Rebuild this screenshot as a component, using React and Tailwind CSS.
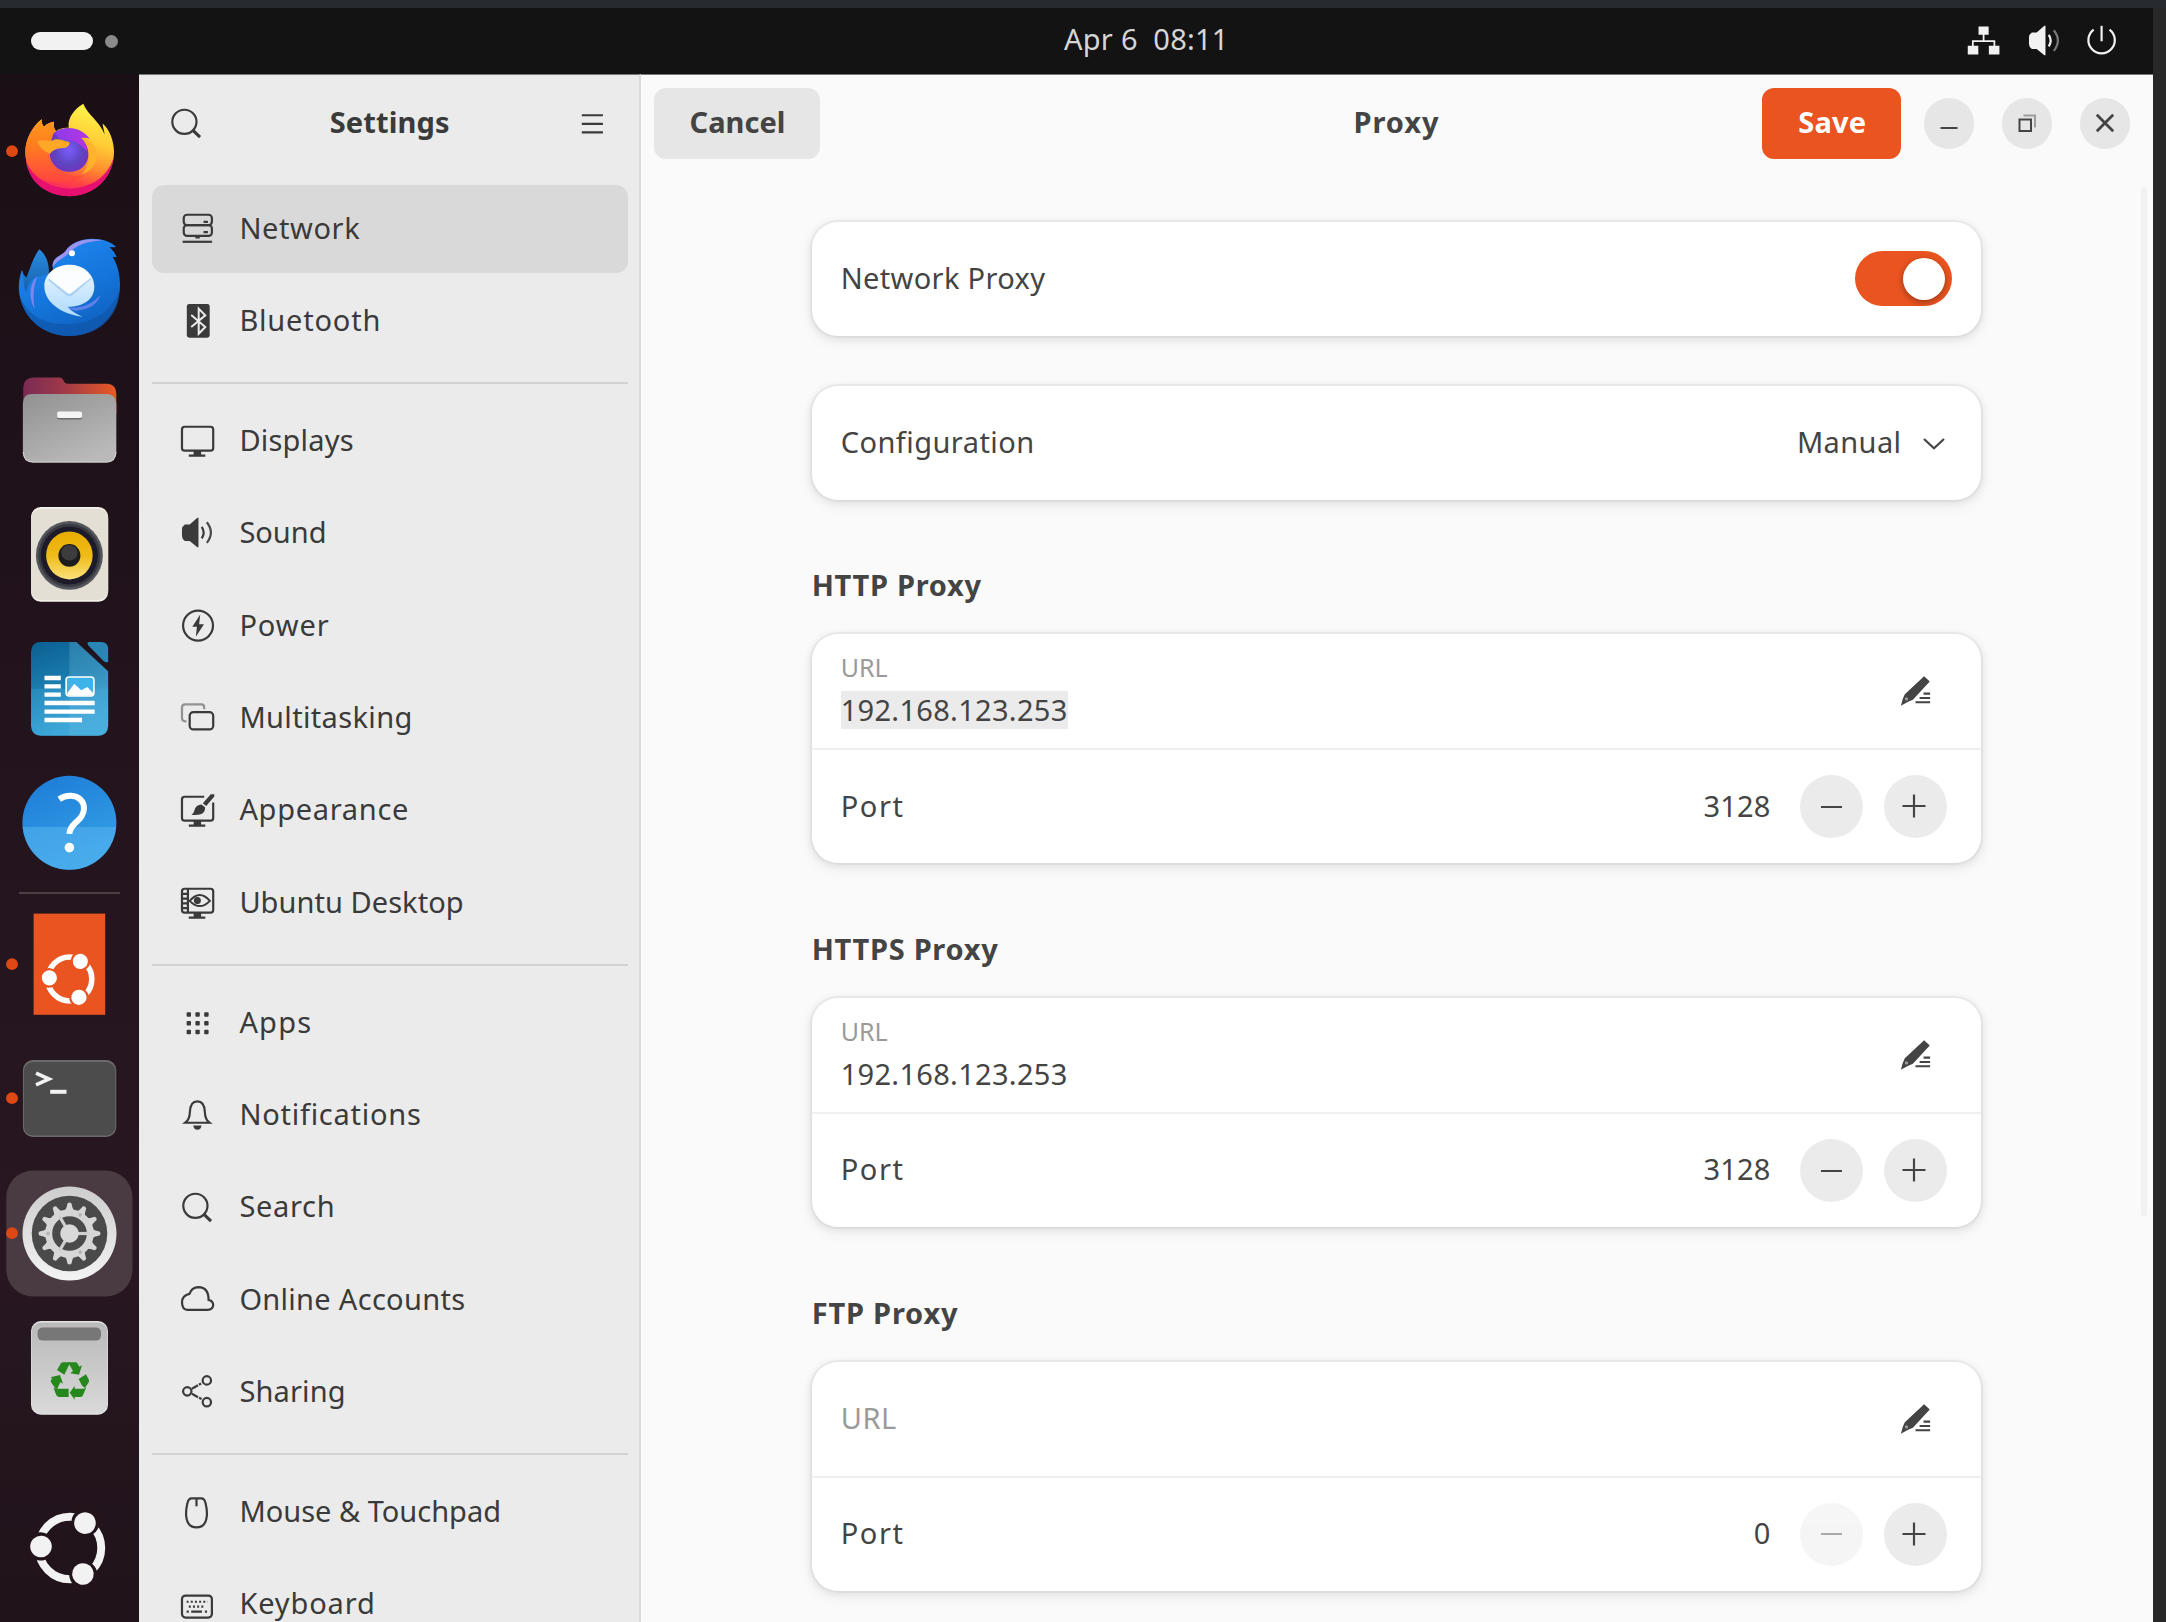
import React from "react";

/* ---------- symbolic 16-unit icons ---------- */

function Sym({ children, className = "size-[35.2px]" }) {
  return (
    <svg
      viewBox="0 0 16 16"
      fill="none"
      stroke="currentColor"
      strokeWidth="1"
      className={"shrink-0 " + className}
    >
      {children}
    </svg>
  );
}

const fillOnly = { fill: "currentColor", stroke: "none" };

const MonitorStand = () => (
  <path d="M6.200 12.600h3.400v1.700h1.900v1.100H4v-1.100h2.200z" {...fillOnly} />
);

const NetworkIcon = () => (
  <Sym>
    <rect x="1.700" y="1.700" width="12.800" height="4.700" rx="1.500" />
    <rect x="1.700" y="6.400" width="12.800" height="4.900" rx="1.500" />
    <path d="M10.700 4.400h2v1h-2zM10.700 9.100h2v1h-2zM7 11.300h2v1.200H7z" {...fillOnly} />
    <path d="M1.200 14h13.400" />
  </Sym>
);

const BluetoothIcon = () => (
  <Sym>
    <rect x="3.100" y="0.500" width="10.400" height="15.300" rx="1.100" {...fillOnly} />
    <path d="M5.100 5.400 11.500 10.900 8.500 14V2.600l3 3-6.400 5.300" stroke="#ebebeb" strokeWidth="0.900" />
  </Sym>
);

const DisplaysIcon = () => (
  <Sym>
    <rect x="0.900" y="1.700" width="14.200" height="10.900" rx="1.200" />
    <MonitorStand />
  </Sym>
);

const SoundIcon = ({ dimWave }) => (
  <Sym>
    <path d="M2.200 4.300h2.200L7.900 1.300h.5v13.400H7.900L4.400 11.800H2.200Q.9 10.800.9 9.500V6.500Q.9 5.200 2.200 4.300z" {...fillOnly} />
    <path d="M9.900 5.400q1.700 2.600 0 5.200" />
    <path d="M12.200 3.300q3.700 4.700 0 9.400" strokeOpacity={dimWave ? 0.45 : 0.9} />
  </Sym>
);

const PowerIcon = () => (
  <Sym>
    <circle cx="8.200" cy="8" r="6.800" />
    <path d="M9.200 2.900 5.600 8.500H7.700L7.200 13.100 10.900 7.400H8.700z" {...fillOnly} />
  </Sym>
);

const MultitaskingIcon = () => (
  <Sym>
    <path d="M2.900 9.700H2.400Q.9 9.700.9 8.200V3.500Q.9 2 2.400 2H9.800Q11 2 11 3.400V4.200" strokeOpacity="0.500" />
    <rect x="4.400" y="5.500" width="10.700" height="7.900" rx="1.700" />
  </Sym>
);

const AppearanceIcon = () => (
  <Sym>
    <path d="M11 1.700H2.100Q.9 1.700.9 2.900V11.400Q.9 12.600 2.100 12.600H13.900Q15.100 12.600 15.100 11.400V4.300" />
    <MonitorStand />
    <path d="M14 .6h1.600v1L11.900 5.900 10.400 4.700zM9.800 5.200 11.400 6.500Q11.500 8.900 9.400 9.700 7.300 10.300 5.200 9.900 6.400 9 6.600 7.700 7.200 5.300 9.800 5.200z" {...fillOnly} />
  </Sym>
);

const UbuntuDesktopIcon = () => (
  <Sym>
    <rect x="0.900" y="1.700" width="14.200" height="10.900" rx="1.200" />
    <MonitorStand />
    <path d="M3.600 1.700v10.900M.9 4h2.700M.9 6.200h2.700M.9 8.400h2.700M.9 10.500h2.700" />
    <path d="M4.400 7.200Q9 1.800 13.600 7.200 9 12 4.400 7.200z" strokeWidth="0.900" />
    <circle cx="7.900" cy="7.100" r="1.600" {...fillOnly} />
  </Sym>
);

const AppsIcon = () => (
  <Sym>
    {[3, 7, 11].map((y) =>
      [3, 7, 11].map((x) => (
        <rect key={x + "-" + y} x={x} y={y + 0.3} width="2" height="2" rx="0.400" {...fillOnly} />
      ))
    )}
  </Sym>
);

const BellIcon = () => (
  <Sym>
    <path d="M2.400 11.700Q4.400 10.200 4.500 6.800 4.700 2 7.900 2 11.100 2 11.300 6.800 11.400 10.200 13.400 11.700z" />
    <path d="M6 13h3.800Q9.500 14.900 7.900 14.900 6.300 14.900 6 13z" {...fillOnly} />
  </Sym>
);

const SearchIcon = () => (
  <Sym>
    <circle cx="7" cy="7.200" r="5.500" />
    <path d="M10.800 11 14.100 14.200" strokeWidth="1.400" />
  </Sym>
);

const CloudIcon = () => (
  <Sym>
    <path d="M3.400 12.700H12.800Q15.100 12.500 15.100 10.400 15 8.600 13 8.100 13 2.400 8.400 2.300 5.300 2.400 4.300 5.400 1 6 .9 9.300 1 12.500 3.400 12.700z" />
  </Sym>
);

const ShareIcon = () => (
  <Sym>
    <circle cx="3.300" cy="7.900" r="1.900" />
    <circle cx="12.200" cy="2.900" r="1.900" />
    <circle cx="12.200" cy="12.800" r="1.900" />
    <path d="M5.400 6.700 9.600 4.300M5.400 9 9.800 11.400" strokeDasharray="3.200 0.500" />
  </Sym>
);

const MouseIcon = () => (
  <Sym>
    <path d="M5.100 2H9.900Q11.300 2.200 11.700 4.600 12.400 7.500 12.200 10 11.700 15.200 7.500 15.200 3.300 15.200 2.800 10 2.600 7.500 3.300 4.600 3.700 2.200 5.100 2z" />
    <path d="M7.500 2v3.600" />
  </Sym>
);

const KeyboardIcon = () => (
  <Sym>
    <rect x="0.900" y="3.900" width="13.600" height="10" rx="1.600" />
    <path d="M3 6.700h9.600M4 8.900h7.600" strokeDasharray="0.900 1" />
    <path d="M3 11.200h1M5.100 11.200h4.900M11.300 11.200h1" />
  </Sym>
);

const MenuIcon = () => (
  <Sym>
    <path d="M3.100 4.200h9.600M3.100 8.100h9.600M3.100 12h9.600" />
  </Sym>
);

/* ---------- top bar icons ---------- */

const WiredIcon = () => (
  <Sym>
    <path d="M5.700 1.600h4.600v3.700H5.700zM.8 10.300h4.800v4H.8zM10.400 10.300h4.800v4h-4.800z" {...fillOnly} />
    <path d="M8 5v3.200M3.100 10.500V8.200h9.800v2.300" strokeWidth="0.800" />
  </Sym>
);

const ShutdownIcon = () => (
  <Sym>
    <path d="M4.400 3A6 6 0 1 0 11.600 3" />
    <path d="M8 1.300v7" />
  </Sym>
);

/* ---------- dock artwork ---------- */

function Slot({ children, dot }) {
  return (
    <svg viewBox="0 0 139 134.4" className="block h-[134.4px] w-[139px] shrink-0">
      {children}
      {dot && <circle cx="12" cy="67.200" r="5.900" fill="#dd4814" />}
    </svg>
  );
}

const Firefox = () => (
  <Slot dot>
    <defs>
      <linearGradient id="ffBody" gradientUnits="userSpaceOnUse" x1="265" y1="60" x2="190" y2="316">
        <stop offset="0" stopColor="#ffef48" />
        <stop offset="0.350" stopColor="#ffc934" />
        <stop offset="0.620" stopColor="#ff8a2e" />
        <stop offset="0.820" stopColor="#ff4245" />
        <stop offset="1" stopColor="#f5206c" />
      </linearGradient>
      <radialGradient id="ffGlobe" cx="0.480" cy="0.500" r="0.620">
        <stop offset="0" stopColor="#7a5cff" />
        <stop offset="0.550" stopColor="#5f44bf" />
        <stop offset="1" stopColor="#7c2bc0" />
      </radialGradient>
      <linearGradient id="ffLeft" x1="0" y1="0" x2="0" y2="1">
        <stop offset="0" stopColor="#ff9a1a" />
        <stop offset="0.450" stopColor="#ff7a22" />
        <stop offset="1" stopColor="#ff4341" />
      </linearGradient>
      <linearGradient id="ffHair" x1="0" y1="0" x2="1" y2="0">
        <stop offset="0" stopColor="#8b3de8" />
        <stop offset="1" stopColor="#b833e6" />
      </linearGradient>
    </defs>
    <g transform="translate(0 6.500) scale(0.33333)">
      <path
        d="M250 40C262 72 298 92 314 132C312 118 308 108 308 99C328 116 342 150 342 184C342 260 282 317 208 317C134 317 76 260 76 184C76 148 96 108 125 86C124 96 127 103 132 109C142 99 152 95 162 94C160 105 162 115 168 122C180 113 196 112 206 112C202 80 225 55 250 40Z"
        fill="url(#ffBody)"
      />
      <path
        d="M76 184C76 148 96 108 125 86C124 96 127 103 132 109C142 99 152 95 162 94C160 105 162 115 168 122L150 190C152 235 200 262 250 256C200 290 120 280 86 236Q76 206 76 184Z"
        fill="url(#ffLeft)"
      />
      <path d="M78 214C106 272 160 294 208 294C270 294 320 262 340 205C332 270 278 317 208 317C142 317 88 278 78 214Z" fill="#e5106f" />
      <path d="M160 130C182 106 240 105 268 144C258 141 250 140 243 142C270 165 272 204 254 224C242 238 226 244 207 244C175 244 149 218 149 188C149 176 150 160 160 130Z" fill="url(#ffGlobe)" />
      <path d="M164 126C185 108 240 105 268 144C256 140 248 140 242 143C254 154 261 166 263 184Q225 140 180 148Z" fill="url(#ffHair)" />
      <path d="M243 142C266 144 294 164 290 200C287 226 268 244 244 252C262 236 269 212 266 188C263 166 254 152 243 142Z" fill="#ffb22c" fillOpacity="0.900" />
      <path d="M112 152C124 146 140 153 158 150C170 142 184 149 206 154C212 160 206 168 196 172C176 174 162 174 150 190C132 182 116 168 112 152Z" fill="#ffa726" />
    </g>
  </Slot>
);

const Thunderbird = () => (
  <Slot>
    <defs>
      <linearGradient id="tbBody" x1="0.200" y1="0" x2="0.700" y2="1">
        <stop offset="0" stopColor="#2089f2" />
        <stop offset="0.550" stopColor="#1475db" />
        <stop offset="1" stopColor="#0f5fbd" />
      </linearGradient>
      <linearGradient id="tbMail" x1="0" y1="0" x2="0" y2="1">
        <stop offset="0" stopColor="#eef7ff" />
        <stop offset="1" stopColor="#aedafd" />
      </linearGradient>
      <linearGradient id="tbWing" x1="0" y1="0" x2="0" y2="1">
        <stop offset="0" stopColor="#2a8be0" />
        <stop offset="1" stopColor="#0b4f93" />
      </linearGradient>
    </defs>
    <g transform="translate(0 -128) scale(0.33333)">
      <path d="M118 478C140 495 150 525 146 560L80 660C50 620 52 575 66 540C68 550 72 558 80 562C92 530 100 500 118 478Z" fill="url(#tbWing)" />
      <path
        d="M158 532C156 500 186 498 196 484C216 452 262 442 296 448C316 450 334 458 348 470C340 472 334 472 328 472C338 480 346 490 350 502C346 502 342 500 338 500C354 526 360 556 360 588C358 672 296 738 208 738C124 738 58 676 57 592C58 570 62 556 66 540C72 560 70 590 78 606C84 580 96 566 110 560L160 548Z"
        fill="url(#tbBody)"
      />
      <path d="M60 620C90 690 150 704 208 702C280 700 340 660 358 600C358 680 296 738 208 738C134 738 76 690 60 620Z" fill="#0f55a8" fillOpacity="0.650" />
      <path d="M158 532C156 500 186 498 196 484C216 452 262 442 310 451C262 453 228 466 206 490C190 506 172 510 158 532Z" fill="#9a93f2" />
      <path d="M112 560C90 575 84 620 104 656C98 620 100 590 112 560Z" fill="#7f86ee" />
      <circle cx="216" cy="490" r="9" fill="#ffffff" />
      <path d="M208 524C250 524 283 552 283 590C283 628 250 650 204 650C214 664 230 672 248 680C190 674 133 640 133 588C133 552 166 524 208 524Z" fill="url(#tbMail)" />
      <path d="M202 652C240 658 276 644 300 616C296 640 266 662 224 662Z" fill="#5f82ea" />
      <path d="M146 568 200 613Q208 619 216 613L272 564" fill="none" stroke="#a9cff0" strokeWidth="6" />
      <path d="M143 563 200 607Q208 613 216 607L273 563C262 538 236 525 208 525C178 525 154 540 143 563Z" fill="#fbfdff" />
    </g>
  </Slot>
);

const Files = () => (
  <Slot>
    <defs>
      <linearGradient id="flBack" x1="0" y1="0" x2="1" y2="0">
        <stop offset="0" stopColor="#7b2a55" />
        <stop offset="0.450" stopColor="#a03a48" />
        <stop offset="1" stopColor="#e95a22" />
      </linearGradient>
      <linearGradient id="flFront" x1="0" y1="0" x2="0.600" y2="1">
        <stop offset="0" stopColor="#919191" />
        <stop offset="1" stopColor="#b9b9b9" />
      </linearGradient>
    </defs>
    <g transform="translate(0 8.100) scale(0.40816 0.33333)">
      <path d="M57 82Q58 52 82 52H145Q152 52 156 62 159 71 166 71H262Q285 73 285 100V160H57Z" fill="url(#flBack)" />
      <path d="M56 130Q57 102 78 102H262Q284 104 285 130V276Q284 306 262 307H80Q57 306 56 276Z" fill="url(#flFront)" />
      <path d="M57 276Q58 305 80 306H262Q283 305 284 276" fill="none" stroke="#d2d2d2" strokeWidth="3" />
      <rect x="140" y="158" width="61" height="20" rx="5" fill="#6d6d6d" />
      <rect x="140" y="154" width="61" height="20" rx="5" fill="#f4f4f4" />
    </g>
  </Slot>
);

const Rhythmbox = () => (
  <Slot>
    <defs>
      <linearGradient id="rbCone" x1="0" y1="0" x2="0" y2="1">
        <stop offset="0" stopColor="#e9ad00" />
        <stop offset="0.500" stopColor="#eebb18" />
        <stop offset="1" stopColor="#fbe27c" />
      </linearGradient>
    </defs>
    <g transform="translate(0 -126.900) scale(0.40816 0.33333)">
      <rect x="76" y="441" width="189" height="284" rx="24" ry="29" fill="#f3f1ea" />
      <rect x="76" y="446" width="189" height="274" rx="24" ry="29" fill="#e3dfd5" />
      <ellipse cx="170" cy="586" rx="82" ry="103" fill="#55565c" />
      <ellipse cx="170" cy="586" rx="76" ry="95" fill="#3a3a42" />
      <ellipse cx="170" cy="586" rx="70" ry="87" fill="#1d1b2a" />
      <ellipse cx="170" cy="586" rx="57" ry="72" fill="url(#rbCone)" />
      <ellipse cx="170" cy="586" rx="27" ry="34" fill="#1c1c1c" />
      <ellipse cx="170" cy="578" rx="20" ry="23" fill="#3c3c3c" />
    </g>
  </Slot>
);

const Writer = () => (
  <Slot>
    <defs>
      <linearGradient id="wrBg" x1="0" y1="0" x2="0.300" y2="1">
        <stop offset="0" stopColor="#0a5f90" />
        <stop offset="0.480" stopColor="#1b7cae" />
        <stop offset="1" stopColor="#3aa5d6" />
      </linearGradient>
    </defs>
    <g transform="translate(0 -261.300) scale(0.40816 0.33333)">
      <path d="M76 876Q77 847 100 847H187L265 935V1098Q264 1127 241 1128H100Q77 1127 76 1098Z" fill="url(#wrBg)" />
      <path d="M170 847H187L265 935V1098Q264 1127 241 1128H170Z" fill="#7cc3e4" fillOpacity="0.250" />
      <path d="M76 987H265V1098Q264 1127 241 1128H100Q77 1127 76 1098Z" fill="#4db5e6" fillOpacity="0.250" />
      <path d="M214 850Q215 847 220 847H248Q265 848 265 868V907Q258 910 253 903L216 857Z" fill="#2a86b4" />
      <path d="M109 955H149M109 980H149M109 1005H149M109 1030H232M109 1056H232M109 1081H201" stroke="#ffffff" strokeWidth="13" />
      <rect x="162" y="952" width="68" height="57" rx="7" ry="9" fill="#3db3ea" stroke="#ffffff" strokeWidth="4" />
      <path d="M165 1000 182 972 199 992 214 982 228 1000V1008H165Z" fill="#ffffff" />
    </g>
  </Slot>
);

const Help = () => (
  <Slot>
    <defs>
      <linearGradient id="hpTop" x1="0" y1="0" x2="0.400" y2="1">
        <stop offset="0" stopColor="#1c7ad6" />
        <stop offset="1" stopColor="#33a0e6" />
      </linearGradient>
      <clipPath id="hpClip">
        <rect x="0" y="71.900" width="139" height="60" />
      </clipPath>
    </defs>
    <circle cx="69.400" cy="67.800" r="47" fill="url(#hpTop)" />
    <circle cx="69.400" cy="67.800" r="47" fill="#5ab4ee" fillOpacity="0.550" clipPath="url(#hpClip)" />
    <path d="M59.200 44.200C63 41.600 67 40.600 71 40.800C79 41.200 84.200 46.500 84 53.500C83.800 60.500 79.500 64 75.500 67.800C71.500 71.500 69.600 74 69.400 79" fill="none" stroke="#ffffff" strokeWidth="6" />
    <circle cx="69.400" cy="92.600" r="4.800" fill="#ffffff" />
  </Slot>
);

/* Circle of friends: three heads on a broken ring. */
function Friends({ cx, cy, scale, fill, gap }) {
  return (
    <g transform={`translate(${cx} ${cy}) scale(${scale})`}>
      <circle r="71" fill="none" stroke={fill} strokeWidth="18" />
      {[183, -59, 63.5].map((a) => (
        <g key={a} transform={`rotate(${a})`}>
          <circle cx="68" r="32" fill={gap} />
          <circle cx="66" r="24.500" fill={fill} />
        </g>
      ))}
    </g>
  );
}

const Installer = () => (
  <Slot dot>
    <rect x="33.600" y="16.600" width="71.600" height="101.200" fill="#e95420" />
    <Friends cx="69.800" cy="82" scale="0.310" fill="#ffffff" gap="#e95420" />
  </Slot>
);

const Terminal = () => (
  <Slot dot>
    <rect x="22.900" y="29" width="93.400" height="77" rx="10" fill="#6b6b6b" />
    <rect x="23.900" y="31" width="91.400" height="73.500" rx="9" fill="#4c4c4c" />
    <path d="M36 42.200 49 48 36 53.800" fill="none" stroke="#f2f2f2" strokeWidth="3.600" />
    <path d="M50.200 60.800H66.500" stroke="#f2f2f2" strokeWidth="4" />
  </Slot>
);

const SettingsGear = () => (
  <Slot dot>
    <defs>
      <linearGradient id="stRing" x1="0" y1="0" x2="0" y2="1">
        <stop offset="0" stopColor="#cdcdcd" />
        <stop offset="1" stopColor="#f3f3f3" />
      </linearGradient>
    </defs>
    <rect x="6.300" y="4.400" width="126.200" height="126.200" rx="27" fill="#4a3b43" />
    <g transform="translate(69.500 67.500)">
      <circle r="47" fill="url(#stRing)" />
      <circle r="37.800" fill="#4a4a4a" />
      <circle r="20.800" fill="none" stroke="#d6d6d6" strokeWidth="7" />
      {[0, 30, 60, 90, 120, 150, 180, 210, 240, 270, 300, 330].map((a) => (
        <path key={a} transform={`rotate(${a})`} d="M22 -4.800 26 -3 30 -2Q32 0 30 2L26 3 22 4.800Z" fill="#d6d6d6" />
      ))}
      {[0, 120, 240].map((a) => (
        <path key={a} transform={`rotate(${a})`} d="M0 0H20" stroke="#cfcfcf" strokeWidth="3.200" />
      ))}
      {[60, 180, 300].map((a) => (
        <circle key={a} transform={`rotate(${a})`} cx="21.500" r="1.900" fill="#b5b5b5" />
      ))}
      <circle r="9.300" fill="#d9d9d9" />
    </g>
  </Slot>
);

const Trash = () => (
  <Slot>
    <defs>
      <linearGradient id="trBody" x1="0" y1="0" x2="0" y2="1">
        <stop offset="0" stopColor="#b9b9b9" />
        <stop offset="1" stopColor="#d9d9d9" />
      </linearGradient>
    </defs>
    <rect x="31" y="21" width="77" height="93.700" rx="10" fill="#e4e4e4" />
    <rect x="31.500" y="22.500" width="76" height="91" rx="9.500" fill="url(#trBody)" />
    <rect x="37.600" y="27.600" width="63.400" height="13" rx="5" fill="#777777" />
    <g transform="translate(0 -140) scale(0.33333)" fill="#26871c">
      <path d="M171 630 183 610Q185 607 189 607H211L193 644Z" />
      <path d="M204 607H226Q231 607 233 611L238 620 246 616 237 644 211 640 219 633Z" />
      <path d="M151 652 180 645 189 671 181 667 170 690 154 668Q151 664 153 660L157 655Z" />
      <path d="M236 657 258 643 266 658Q269 664 265 669L255 683Q249 681 245 675Z" />
      <path d="M160 682Q164 686 170 686H206V711H178Q172 711 169 706Z" />
      <path d="M209 698 224 677V686H250Q255 686 259 682L249 706Q247 711 241 711H224V719Z" />
    </g>
  </Slot>
);

const ShowApps = () => (
  <svg viewBox="0 0 139 142" className="mt-auto block h-[142px] w-[139px] shrink-0">
    <Friends cx="70" cy="68" scale="0.440" fill="#f2f2f2" gap="#23141c" />
  </svg>
);

function Dock() {
  return (
    <nav className="flex w-[139px] shrink-0 flex-col bg-linear-to-b from-[#1b0f16] via-[#281721] via-75% to-[#20131a] pt-[9.500px]">
      <Firefox />
      <Thunderbird />
      <Files />
      <Rhythmbox />
      <Writer />
      <Help />
      <div className="mx-[19px] mt-[2.500px] mb-[2.600px] h-[2px] shrink-0 bg-[#4a4145]" />
      <Installer />
      <Terminal />
      <SettingsGear />
      <Trash />
      <ShowApps />
    </nav>
  );
}

/* ---------- settings sidebar ---------- */

const groups = [
  [
    { label: "Network", Icon: NetworkIcon, tracking: "tracking-[0.600px]", active: true },
    { label: "Bluetooth", Icon: BluetoothIcon, tracking: "tracking-[0.800px]" },
  ],
  [
    { label: "Displays", Icon: DisplaysIcon, tracking: "tracking-[0.200px]" },
    { label: "Sound", Icon: SoundIcon, tracking: "tracking-[0px]" },
    { label: "Power", Icon: PowerIcon, tracking: "tracking-[0.900px]" },
    { label: "Multitasking", Icon: MultitaskingIcon, tracking: "tracking-[0.350px]" },
    { label: "Appearance", Icon: AppearanceIcon, tracking: "tracking-[0.700px]", flush: true },
    { label: "Ubuntu Desktop", Icon: UbuntuDesktopIcon, tracking: "tracking-[0.050px]" },
  ],
  [
    { label: "Apps", Icon: AppsIcon, tracking: "tracking-[1.200px]", flush: true },
    { label: "Notifications", Icon: BellIcon, tracking: "tracking-[0.750px]" },
    { label: "Search", Icon: SearchIcon, tracking: "tracking-[0.700px]" },
    { label: "Online Accounts", Icon: CloudIcon, tracking: "tracking-[0.300px]" },
    { label: "Sharing", Icon: ShareIcon, tracking: "tracking-[0.150px]" },
  ],
  [
    { label: "Mouse & Touchpad", Icon: MouseIcon, tracking: "tracking-[0px]" },
    { label: "Keyboard", Icon: KeyboardIcon, tracking: "tracking-[0.850px]" },
  ],
];

function Sidebar() {
  return (
    <aside className="flex w-[502px] shrink-0 flex-col overflow-hidden border-t border-r-2 border-t-[#777] border-r-[#dadada] bg-[#ebebeb] text-[#3a3a3a]">
      <header className="flex h-[97px] shrink-0 items-center justify-between pr-[28.500px] pl-[30px]">
        <SearchIcon />
        <h1 className="mb-[2.500px] font-bold tracking-[0.160px]">Settings</h1>
        <MenuIcon />
      </header>
      <div className="flex flex-col pt-[12.500px] pr-[11px] pl-[12.500px]">
        {groups.map((rows, g) => (
          <React.Fragment key={g}>
            {g > 0 && (
              <div className="flex h-[27.400px] items-center">
                <div className="h-[2px] w-full bg-[#d2d2d2]" />
              </div>
            )}
            {rows.map(({ label, Icon, tracking, active, flush }) => (
              <div
                key={label}
                className={
                  "mb-[4.400px] flex h-[88px] shrink-0 items-center rounded-[12px] pl-[28.200px] " +
                  (flush ? "gap-[24.500px] " : "gap-[24.500px] ") +
                  (active ? "bg-[#d9d9d9]" : "")
                }
              >
                <Icon />
                <span className={"mb-[1.600px] whitespace-nowrap " + tracking}>{label}</span>
              </div>
            ))}
          </React.Fragment>
        ))}
      </div>
    </aside>
  );
}

/* ---------- proxy page ---------- */

function Card({ children }) {
  return (
    <section className="flex flex-col rounded-[26px] bg-white shadow-[0_0_0_2px_rgba(0,0,0,0.035),0_2px_7px_2px_rgba(0,0,0,0.070),0_5px_13px_4px_rgba(0,0,0,0.030)]">
      {children}
    </section>
  );
}

const PencilIcon = () => (
  <Sym className="h-[30px] w-[31px]">
    <path d="M12.600.1 15.600 2.900 6.600 12.700Q3.900 13.700.2 15.800 1 12 2.300 9.700Z" {...fillOnly} />
    <circle cx="3.200" cy="12.200" r="0.900" fill="#9a9a9a" stroke="none" />
    <path d="M12.300 9.400h3.500M10.200 11.700h5.600M8 14h7.800" strokeWidth="1.100" />
  </Sym>
);

function RoundButton({ children, disabled }) {
  return (
    <button
      className={
        "flex size-[63.300px] items-center justify-center rounded-full bg-[#ebebeb] " +
        (disabled ? "opacity-45" : "")
      }
    >
      {children}
    </button>
  );
}

function ProxyGroup({ title, tracking, url, selected, port }) {
  return (
    <>
      <h3 className={"mt-[65.300px] mb-[29.500px] h-[40px] font-bold leading-[40px] " + tracking}>{title}</h3>
      <Card>
        <div className="flex h-[113.700px] items-center justify-between pr-[50px] pl-[29px]">
          {url ? (
            <div className="flex flex-col items-start gap-[8px]">
              <span className="-mt-[1px] mb-[1px] text-[25px] leading-[30px] text-[#9a9a9a]">URL</span>
              <span className={"h-[38px] leading-[37px] tracking-[0.300px] " + (selected ? "bg-[#ebebeb]" : "")}>
                {url}
              </span>
            </div>
          ) : (
            <span className="mb-[2.500px] tracking-[0.600px] text-[#9a9a9a]">URL</span>
          )}
          <PencilIcon />
        </div>
        <div className="h-[2px] bg-[#f0f0f0]" />
        <div className="flex h-[113.300px] items-center pr-[33.700px] pl-[29px]">
          <span className="mb-[2.500px] tracking-[1.600px]">Port</span>
          <span className="mr-[29px] mb-[2.500px] ml-auto tracking-[0.200px]">{port}</span>
          <RoundButton disabled={port === "0"}>
            <div className="h-[2px] w-[21.500px] bg-current" />
          </RoundButton>
          <div className="w-[20.600px]" />
          <RoundButton>
            <svg viewBox="0 0 24 24" className="mr-[1.500px] mb-[1.500px] size-[24px]">
              <path d="M12 0.500V23.500M0.500 12H23.500" stroke="currentColor" strokeWidth="2.200" />
            </svg>
          </RoundButton>
        </div>
      </Card>
    </>
  );
}

function WindowButton({ children }) {
  return (
    <button className="flex size-[50.400px] items-center justify-center rounded-full bg-[#e6e6e6]">
      <svg viewBox="0 0 24 24" fill="none" stroke="currentColor" strokeWidth="2" className="size-[24px]">
        {children}
      </svg>
    </button>
  );
}

function ProxyPage() {
  return (
    <main className="relative flex grow flex-col overflow-hidden border-t border-t-[#777] bg-[#fafafa] text-[#444]">
      <header className="grid h-[97px] shrink-0 grid-cols-[1fr_auto_1fr] items-center pr-[23px] pl-[13px]">
        <button className="flex h-[71.500px] w-[166px] items-center justify-center rounded-[12px] bg-[#e6e6e6] pb-[2.500px] pl-[1px] font-bold tracking-[0.050px]">
          Cancel
        </button>
        <h2 className="mb-[2.500px] ml-[9px] font-bold tracking-[0.900px]">Proxy</h2>
        <div className="flex items-center justify-end gap-[27.400px]">
          <button className="mr-[-4.600px] flex h-[71.500px] w-[139px] items-center justify-center rounded-[12px] bg-[#e95420] pb-[2.500px] pl-[1px] font-bold tracking-[0.200px] text-white">
            Save
          </button>
          <WindowButton>
            <path d="M3.500 17h17" />
          </WindowButton>
          <WindowButton>
            <rect x="4.500" y="8.500" width="11.500" height="11.500" />
            <path d="M8.500 4.500H20V16.500" strokeOpacity="0.450" />
          </WindowButton>
          <WindowButton>
            <path d="M3.800 3.800 20.200 20.200M20.200 3.800 3.800 20.200" strokeWidth="2.800" />
          </WindowButton>
        </div>
      </header>
      <div className="flex flex-col pr-[172.500px] pl-[170.700px] pt-[50.300px]">
        <Card>
          <div className="flex h-[113.400px] items-center justify-between pr-[29px] pl-[29px]">
            <span className="mb-[1.500px] tracking-[0.340px]">Network Proxy</span>
            <div className="flex h-[55px] w-[96.800px] items-center justify-end rounded-full bg-[#e95420] pr-[6.300px]">
              <div className="size-[42.500px] rounded-full bg-white shadow-[0_2px_6px_rgba(0,0,0,0.350)]" />
            </div>
          </div>
        </Card>
        <div className="h-[50.600px]" />
        <Card>
          <div className="flex h-[113.400px] items-center pr-[35.500px] pl-[29px]">
            <span className="mb-[1.500px] tracking-[0.450px]">Configuration</span>
            <span className="mr-[21.500px] mb-[1.500px] ml-auto tracking-[0.400px]">Manual</span>
            <svg viewBox="0 0 22 12" fill="none" stroke="currentColor" strokeWidth="2.200" className="mt-[3px] h-[12px] w-[22px]">
              <path d="M1 1 11 10.200 21 1" />
            </svg>
          </div>
        </Card>
        <ProxyGroup title="HTTP Proxy" tracking="tracking-[0.700px]" url="192.168.123.253" selected port="3128" />
        <ProxyGroup title="HTTPS Proxy" tracking="tracking-[0.700px]" url="192.168.123.253" port="3128" />
        <ProxyGroup title="FTP Proxy" tracking="tracking-[0.800px]" port="0" />
      </div>
      <div className="absolute top-[112px] right-[6.500px] h-[1029px] w-[6px] rounded-full bg-[#f1f1f1]" />
    </main>
  );
}

function TopBar() {
  return (
    <header className="flex h-[66px] shrink-0 items-center bg-[#131313] pr-[33.800px] pl-[31px] text-[#f2f2f2]">
      <div className="h-[17.500px] w-[61.500px] rounded-full bg-[#f2f2f2]" />
      <div className="ml-[12.500px] size-[13px] rounded-full bg-[#8a8a8a]" />
      <span className="mb-[4px] ml-[946px] whitespace-pre tracking-[0.250px] text-[#d6d6d6]">{"Apr 6  08:11"}</span>
      <div className="ml-auto flex items-center">
        <WiredIcon />
        <div className="w-[26px]" />
        <SoundIcon dimWave />
        <div className="w-[22px]" />
        <ShutdownIcon />
      </div>
    </header>
  );
}

export default function App() {
  return (
    <div className="flex h-[1622px] w-[2166px] flex-col overflow-hidden bg-[#282828] font-['Noto_Sans',sans-serif] text-[29px] leading-[40px]">
      <div className="h-[8px] shrink-0 bg-[#272b30]" />
      <div className="flex h-[1614px] w-[2153px] flex-col">
        <TopBar />
        <div className="flex min-h-0 grow">
          <Dock />
          <Sidebar />
          <ProxyPage />
        </div>
      </div>
    </div>
  );
}
